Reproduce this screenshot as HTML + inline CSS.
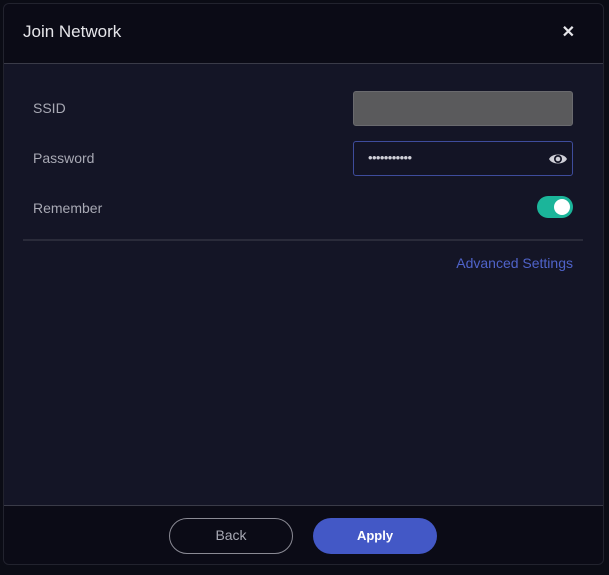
<!DOCTYPE html>
<html><head><meta charset="utf-8"><style>
*{box-sizing:border-box;margin:0;padding:0}
body{width:609px;height:575px;background:#0b0c15;font-family:"Liberation Sans",sans-serif;position:relative;overflow:hidden}
.dlg{position:absolute;left:3px;top:3px;width:601px;height:562px;background:#141526;border-radius:6px;overflow:hidden;border:1px solid #22232e}
.hdr{height:60px;background:#0b0b16;border-bottom:1px solid #3a3b48;position:relative}
.hdr h1{position:absolute;left:19px;top:18px;font-size:17px;font-weight:normal;color:#e6e6ea}
.x{position:absolute;right:28px;top:18px;color:#e6e6ea;font-size:16px;font-weight:bold}
.lbl{position:absolute;left:29px;font-size:14px;color:#a8a9b4}
.inp{position:absolute;left:349px;width:220px;height:35px;border-radius:3px}
.ftr{position:absolute;left:0;top:501px;width:100%;height:61px;background:#0b0b16;border-top:1px solid #3a3b48}
.btn{position:absolute;top:12px;width:124px;height:36px;border-radius:18px;font-size:14px;text-align:center;line-height:33px}
</style></head><body>
<div class="dlg">
<div class="hdr"><h1>Join Network</h1><div class="x">✕</div></div>
<div class="lbl" style="top:96px">SSID</div>
<div class="inp" style="top:87px;background:#5a5a5c;border:1px solid #6a6a6e"></div>
<div class="lbl" style="top:146px">Password</div>
<div class="inp" style="top:137px;background:#131425;border:1px solid #3e4c9c">
<span style="position:absolute;left:14px;top:8px;color:#d0d0d8;font-size:13px;letter-spacing:-0.6px">•••••••••••</span>
<svg style="position:absolute;right:4px;top:8px" width="20" height="18" viewBox="0 0 20 18"><path d="M1 9C4 3 16 3 19 9C16 15 4 15 1 9Z" fill="#d0d0d8"/><circle cx="10" cy="9" r="4" fill="#131425"/><circle cx="10" cy="9" r="2.3" fill="#d0d0d8"/></svg>
</div>
<div class="lbl" style="top:196px">Remember</div>
<div style="position:absolute;left:533px;top:192px;width:36px;height:22px;border-radius:11px;background:#1bb59a"><div style="position:absolute;right:3px;top:3px;width:16px;height:16px;border-radius:50%;background:#fff"></div></div>
<div style="position:absolute;left:19px;top:235px;width:560px;height:2px;background:#2a2b3a"></div>
<div style="position:absolute;right:30px;top:251px;font-size:14px;color:#4f63c9">Advanced Settings</div>
<div class="ftr">
<div class="btn" style="left:165px;border:1px solid #8a8a94;color:#a8a9b4">Back</div>
<div class="btn" style="left:309px;background:#4358c6;color:#fff;font-weight:bold;line-height:35px;font-size:13px">Apply</div>
</div>
</div>
</body></html>
